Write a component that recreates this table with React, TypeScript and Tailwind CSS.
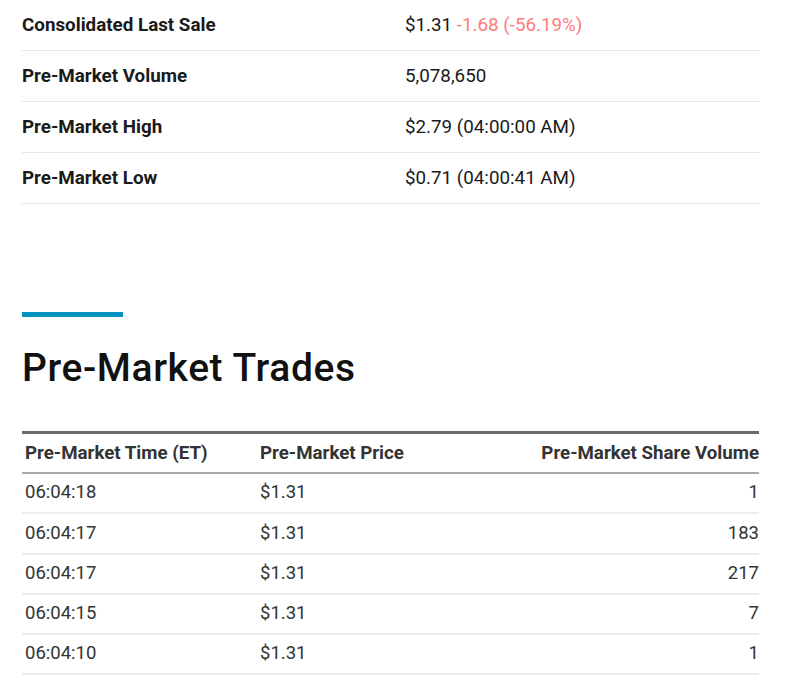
import React from "react";

const summary: { label: string; value: React.ReactNode }[] = [
  {
    label: "Consolidated Last Sale",
    value: (
      <>
        $1.31 <span className="text-[#ff7c7c]">-1.68 (-56.19%)</span>
      </>
    ),
  },
  { label: "Pre-Market Volume", value: "5,078,650" },
  { label: "Pre-Market High", value: "$2.79 (04:00:00 AM)" },
  { label: "Pre-Market Low", value: "$0.71 (04:00:41 AM)" },
];

const trades = [
  ["06:04:18", "$1.31", "1"],
  ["06:04:17", "$1.31", "183"],
  ["06:04:17", "$1.31", "217"],
  ["06:04:15", "$1.31", "7"],
  ["06:04:10", "$1.31", "1"],
];

export default function App() {
  return (
    <div
      className="w-[793px] h-[683px] bg-white overflow-hidden"
      style={{ fontFamily: "Roboto, 'Liberation Sans', sans-serif" }}
    >
      <div className="ml-[22px] w-[737px]">
        <div className="flex flex-col">
          {summary.map((r) => (
            <div
              key={r.label}
              className="flex items-center h-[51px] border-b border-[#e6e6e6] text-[18.8px] text-[#1a1a1a]"
            >
              <div className="w-[383px] font-bold">{r.label}</div>
              <div>{r.value}</div>
            </div>
          ))}
        </div>

        <div className="mt-[108px] w-[101px] h-[5px] bg-[#0092bc]" />
        <h2 className="mt-[27px] text-[39px] leading-[48px] font-medium text-[#111] tracking-[0.6px]">
          Pre-Market Trades
        </h2>

        <div className="mt-[39px] border-t-[3px] border-[#6b6b6b]">
          <div className="flex items-center h-[40px] border-b-2 border-[#a9a9a9] text-[18.7px] font-bold text-[#333]">
            <div className="w-[238px] pl-[3px]">Pre-Market Time (ET)</div>
            <div className="w-[200px]">Pre-Market Price</div>
            <div className="flex-1 text-right">Pre-Market Share Volume</div>
          </div>
          {trades.map((t, i) => (
            <div
              key={i}
              className="flex items-center h-[40.25px] border-b-2 border-[#ececec] text-[18.5px] text-[#333]"
            >
              <div className="w-[238px] pl-[3px]">{t[0]}</div>
              <div className="w-[200px]">{t[1]}</div>
              <div className="flex-1 text-right">{t[2]}</div>
            </div>
          ))}
        </div>
      </div>
    </div>
  );
}
